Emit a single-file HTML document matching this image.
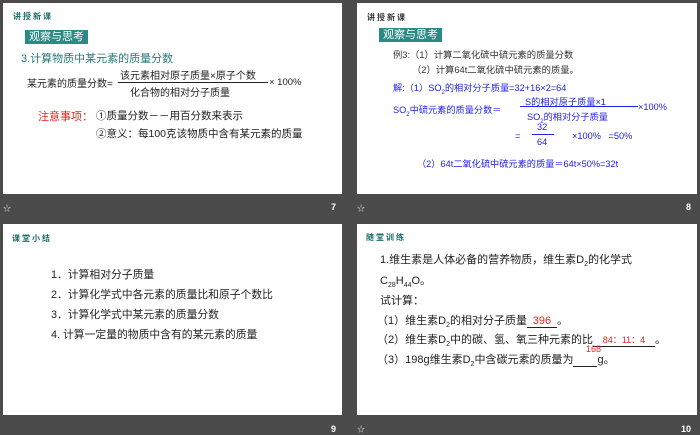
<!DOCTYPE html>
<html><head><meta charset="utf-8"><style>
*{margin:0;padding:0;box-sizing:border-box}
body{width:700px;height:435px;background:#4b4b4b;position:relative;overflow:hidden;font-family:"Liberation Sans","Noto Sans CJK SC",sans-serif}
.s{position:absolute;background:#fff}
.t{position:absolute;white-space:nowrap}
.h{font-size:8px;font-weight:bold;color:#1a6b6b;letter-spacing:2px}
.tag{background:#2a8a84;color:#fff;font-size:11px;padding:0 4px;line-height:14px}
.n{position:absolute;color:#fff;font-size:9px;font-weight:bold}
.st{position:absolute;color:#ddd;font-size:8px}
.bl{color:#2222ee;font-size:9.2px}
.k{color:#222;font-size:10.5px}
.r{color:#e22}
.ln{position:absolute;height:1px;background:#222}
</style></head><body>
<!-- slide 7 -->
<div class="s" style="left:3px;top:3px;width:339px;height:191px">
<div class="t h" style="left:10px;top:8px">讲授新课</div>
<div class="t tag" style="left:22px;top:27px">观察与思考</div>
<div class="t" style="left:18px;top:47px;color:#2a7a7a;font-size:11px">3.计算物质中某元素的质量分数</div>
<div class="t k" style="left:24px;top:72px;font-size:10px">某元素的质量分数=</div>
<div class="t k" style="left:117px;top:64px;font-size:10px">该元素相对原子质量×原子个数</div>
<div class="ln" style="left:115px;top:79px;width:150px"></div>
<div class="t k" style="left:127px;top:81px;font-size:10px">化合物的相对分子质量</div>
<div class="t k" style="left:266px;top:74px;font-size:9.5px">× 100%</div>
<div class="t r" style="left:35px;top:105px;font-size:11px">注意事项：</div>
<div class="t k" style="left:93px;top:105px">①质量分数－－用百分数来表示</div>
<div class="t k" style="left:93px;top:123px">②意义：每100克该物质中含有某元素的质量</div>
</div>
<div class="st" style="left:3px;top:203px">☆</div>
<div class="n" style="left:331px;top:202px">7</div>
<!-- slide 8 -->
<div class="s" style="left:357px;top:3px;width:340px;height:191px">
<div class="t h" style="left:10px;top:9px;color:#333">讲授新课</div>
<div class="t tag" style="left:22px;top:25px">观察与思考</div>
<div class="t" style="left:36px;top:44px;font-size:9.3px;color:#333">例3:（1）计算二氧化硫中硫元素的质量分数</div>
<div class="t" style="left:55px;top:59px;font-size:9.3px;color:#333">（2）计算64t二氧化硫中硫元素的质量。</div>
<div class="t bl" style="left:36px;top:77px">解:（1）SO<sub style="font-size:6px">2</sub>的相对分子质量=32+16×2=64</div>
<div class="t bl" style="left:36px;top:99px">SO<sub style="font-size:6px">2</sub>中硫元素的质量分数＝</div>
<div class="t bl" style="left:168px;top:91px">S的相对原子质量×1</div>
<div class="ln" style="left:163px;top:103px;width:118px;background:#2222ee"></div>
<div class="t bl" style="left:170px;top:106px">SO<sub style="font-size:6px">2</sub>的相对分子质量</div>
<div class="t bl" style="left:281px;top:99px">×100%</div>
<div class="t bl" style="left:158px;top:128px">=</div>
<div class="t bl" style="left:180px;top:119px">32</div>
<div class="ln" style="left:175px;top:131px;width:22px;background:#2222ee"></div>
<div class="t bl" style="left:180px;top:134px">64</div>
<div class="t bl" style="left:215px;top:128px">×100%&nbsp;&nbsp; =50%</div>
<div class="t bl" style="left:60px;top:153px">（2）64t二氧化硫中硫元素的质量＝64t×50%=32t</div>
</div>
<div class="st" style="left:357px;top:203px">☆</div>
<div class="n" style="left:686px;top:202px">8</div>
<!-- slide 9 -->
<div class="s" style="left:3px;top:224px;width:339px;height:191px">
<div class="t h" style="left:9px;top:9px">课堂小结</div>
<div class="t k" style="left:48px;top:42px;font-size:10.8px">1．计算相对分子质量</div>
<div class="t k" style="left:48px;top:62px;font-size:10.8px">2．计算化学式中各元素的质量比和原子个数比</div>
<div class="t k" style="left:48px;top:82px;font-size:10.8px">3．计算化学式中某元素的质量分数</div>
<div class="t k" style="left:48px;top:102px;font-size:10.8px">4. 计算一定量的物质中含有的某元素的质量</div>
</div>
<div class="n" style="left:331px;top:424px">9</div>
<!-- slide 10 -->
<div class="s" style="left:357px;top:224px;width:340px;height:191px">
<div class="t h" style="left:9px;top:8px">随堂训练</div>
<div class="t k" style="left:23px;top:27px;font-size:11px">1.维生素是人体必备的营养物质，维生素D<sub style="font-size:7px">2</sub>的化学式</div>
<div class="t k" style="left:23px;top:48px;font-size:11px">C<sub style="font-size:7px">28</sub>H<sub style="font-size:7px">44</sub>O。</div>
<div class="t k" style="left:23px;top:68px;font-size:11px">试计算：</div>
<div class="t k" style="left:20px;top:88px;font-size:11px">（1）维生素D<sub style="font-size:7px">2</sub>的相对分子质量<span style="display:inline-block;width:30px;border-bottom:1px solid #222;text-align:center;color:#e22">396</span>。</div>
<div class="t k" style="left:20px;top:107px;font-size:11px">（2）维生素D<sub style="font-size:7px">2</sub>中的碳、氢、氧三种元素的比<span style="display:inline-block;width:62px;border-bottom:1px solid #222;text-align:center;color:#e22;font-size:9px">84：11：4</span>。</div>
<div class="t r" style="left:229px;top:120px;font-size:9px">168</div>
<div class="t k" style="left:20px;top:127px;font-size:11px">（3）198g维生素D<sub style="font-size:7px">2</sub>中含碳元素的质量为<span style="display:inline-block;width:24px;border-bottom:1px solid #222">&nbsp;</span>g。</div>
</div>
<div class="st" style="left:357px;top:424px">☆</div>
<div class="n" style="left:681px;top:424px">10</div>
</body></html>
